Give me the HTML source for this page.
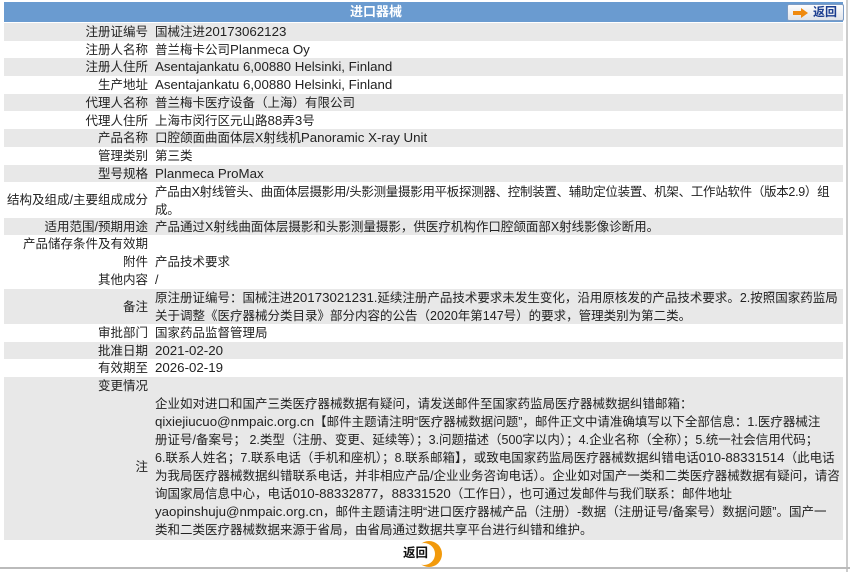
<!DOCTYPE html>
<html><head><meta charset="utf-8"><style>
*{margin:0;padding:0;box-sizing:border-box}
body{width:850px;height:572px;background:#fff;position:relative;overflow:hidden;font-family:"Liberation Sans","Noto Sans CJK SC",sans-serif;font-size:12.5px;color:#222}
.hd{position:absolute;left:4px;top:2px;width:839px;height:20px;background:#6a9bd0}
.hd .t{position:absolute;left:346px;top:1px;color:#fff;font-weight:bold;font-size:13px;line-height:18px}
.btn{position:absolute;left:783px;top:2px;width:57px;height:17px;border:1px solid #7d9cc4;border-radius:2px;background:linear-gradient(#fdfdfd,#dfe3ea);}
.btn .tx{position:absolute;left:25px;top:-1px;color:#1a3d8f;font-weight:bold;font-size:12px;line-height:17px}
.r{position:absolute;left:4px;width:839px}
.g{background:#e8e8e8}
.l{position:absolute;left:0;width:144px;text-align:right;line-height:18px;white-space:nowrap}
.v{position:absolute;left:151px;line-height:18px;white-space:nowrap}
.e{font-size:13.3px}
.vline{position:absolute;left:846px;top:0;width:2px;height:572px;background:#ccc}
.bot{position:absolute;left:0;top:567px;width:850px;height:2px;background:#bbb}
</style></head><body>
<div class="vline"></div>
<div class="hd"><span class="t">进口器械</span>
<div class="btn"><svg width="16" height="10" style="position:absolute;left:5px;top:3px"><path d="M0 3h8V0l7 5-7 5V7H0z" fill="#ef8a10"/></svg><span class="tx">返回</span></div></div>

<div class="r g" style="top:23px;height:17.7px"><span class="l" style="top:0">注册证编号</span><span class="v" style="top:0">国械注进<span class="e">20173062123</span></span></div>
<div class="r" style="top:40.7px;height:17.7px"><span class="l">注册人名称</span><span class="v">普兰梅卡公司<span class="e">Planmeca Oy</span></span></div>
<div class="r g" style="top:58.4px;height:17.7px"><span class="l">注册人住所</span><span class="v e">Asentajankatu 6,00880 Helsinki, Finland</span></div>
<div class="r" style="top:76.1px;height:17.7px"><span class="l">生产地址</span><span class="v e">Asentajankatu 6,00880 Helsinki, Finland</span></div>
<div class="r g" style="top:93.8px;height:17.7px"><span class="l">代理人名称</span><span class="v">普兰梅卡医疗设备（上海）有限公司</span></div>
<div class="r" style="top:111.5px;height:17.7px"><span class="l">代理人住所</span><span class="v">上海市闵行区元山路<span class="e">88</span>弄<span class="e">3</span>号</span></div>
<div class="r g" style="top:129.2px;height:17.7px"><span class="l">产品名称</span><span class="v">口腔颌面曲面体层X射线机<span class="e">Panoramic X-ray Unit</span></span></div>
<div class="r" style="top:146.9px;height:17.7px"><span class="l">管理类别</span><span class="v">第三类</span></div>
<div class="r g" style="top:164.6px;height:17.7px"><span class="l">型号规格</span><span class="v e">Planmeca ProMax</span></div>
<div class="r" style="top:182.3px;height:35.4px"><span class="l" style="top:9px">结构及组成/主要组成成分</span><span class="v" style="top:1px;letter-spacing:-0.3px">产品由X射线管头、曲面体层摄影用/头影测量摄影用平板探测器、控制装置、辅助定位装置、机架、工作站软件（版本2.9）组<br>成。</span></div>
<div class="r g" style="top:217.7px;height:17.7px"><span class="l">适用范围/预期用途</span><span class="v">产品通过X射线曲面体层摄影和头影测量摄影，供医疗机构作口腔颌面部X射线影像诊断用。</span></div>
<div class="r" style="top:235.4px;height:17.7px"><span class="l">产品储存条件及有效期</span></div>
<div class="r" style="top:253.1px;height:17.7px"><span class="l">附件</span><span class="v">产品技术要求</span></div>
<div class="r" style="top:270.8px;height:17.7px"><span class="l">其他内容</span><span class="v">/</span></div>
<div class="r g" style="top:288.5px;height:35.4px"><span class="l" style="top:9px">备注</span><span class="v" style="top:0">原注册证编号：国械注进<span class="e">20173021231</span>.延续注册产品技术要求未发生变化，沿用原核发的产品技术要求。2.按照国家药监局<br>关于调整《医疗器械分类目录》部分内容的公告（2020年第147号）的要求，管理类别为第二类。</span></div>
<div class="r" style="top:323.9px;height:17.7px"><span class="l">审批部门</span><span class="v">国家药品监督管理局</span></div>
<div class="r g" style="top:341.6px;height:17.7px"><span class="l">批准日期</span><span class="v e">2021-02-20</span></div>
<div class="r" style="top:359.3px;height:17.7px"><span class="l">有效期至</span><span class="v e">2026-02-19</span></div>
<div class="r g" style="top:377px;height:163px"><span class="l">变更情况</span>
<span class="l" style="top:81px">注</span>
<span class="v" style="top:18px">企业如对进口和国产三类医疗器械数据有疑问，请发送邮件至国家药监局医疗器械数据纠错邮箱：<br><span class="e">qixiejiucuo@nmpaic.org.cn</span>【邮件主题请注明“医疗器械数据问题”，邮件正文中请准确填写以下全部信息：1.医疗器械注<br>册证号/备案号； 2.类型（注册、变更、延续等）；3.问题描述（500字以内）；4.企业名称（全称）；5.统一社会信用代码；<br>6.联系人姓名；7.联系电话（手机和座机）；8.联系邮箱】，或致电国家药监局医疗器械数据纠错电话<span class="e">010-88331514</span>（此电话<br>为我局医疗器械数据纠错联系电话，并非相应产品/企业业务咨询电话）。企业如对国产一类和二类医疗器械数据有疑问，请咨<br>询国家局信息中心，电话<span class="e">010-88332877，88331520</span>（工作日），也可通过发邮件与我们联系：邮件地址<br><span class="e">yaopinshuju@nmpaic.org.cn</span>，邮件主题请注明“进口医疗器械产品（注册）-数据（注册证号/备案号）数据问题”。国产一<br>类和二类医疗器械数据来源于省局，由省局通过数据共享平台进行纠错和维护。</span></div>

<svg style="position:absolute;left:412px;top:540px" width="34" height="28"><circle cx="17" cy="14" r="13" fill="#f29a0c"/><circle cx="12" cy="14" r="11" fill="#fff"/></svg>
<span style="position:absolute;left:403px;top:545px;font-weight:bold;font-size:12.5px;line-height:16px;color:#111">返回</span>
<div class="bot"></div>
</body></html>
